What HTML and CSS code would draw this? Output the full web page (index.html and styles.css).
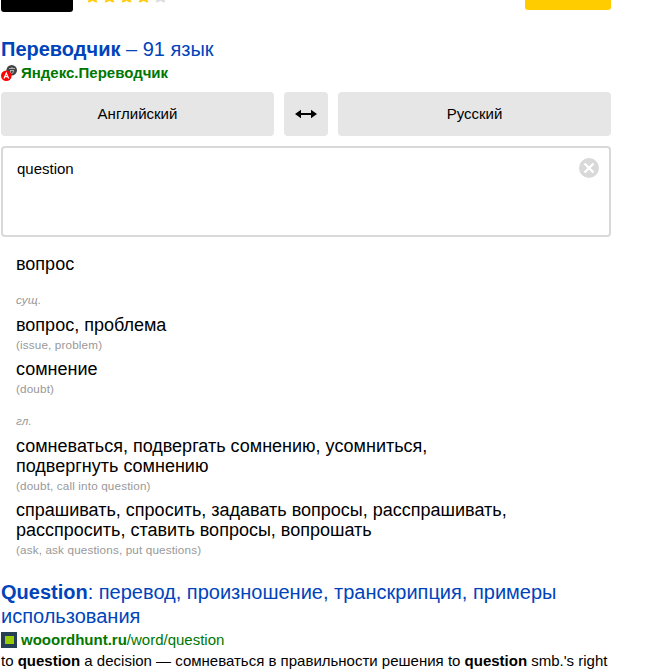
FILE: index.html
```html
<!DOCTYPE html>
<html lang="ru">
<head>
<meta charset="utf-8">
<title>Переводчик</title>
<link rel="stylesheet" href="styles.css">
</head>
<body>
<div class="market">
  <div class="thumb"></div>
  <svg class="stars" width="82" height="4" viewBox="0 0 82 4"><g fill="#fc1"><path id="s" d="M2.500-3h7.500v2l1.500 3.200H9L6.500.8 4 2.200H1.500L3-1z"/><use href="#s" x="17"/><use href="#s" x="34"/><use href="#s" x="51"/></g><path fill="#ddd" d="M70.500-3H78v2l1.500 3.200H77L74.500.8 72 2.200h-2.500L71-1z"/></svg>
  <div class="buy"></div>
</div>
<main>
  <section class="translator">
    <h2><a><b>Переводчик</b> – 91 язык</a></h2>
    <div class="source">
      <svg width="16" height="16" viewBox="0 0 16 16"><circle cx="10.700" cy="5.300" r="5.300" fill="#444"/><path d="M8 3.500h6M11 2v1.500M9 5.500h4M12.500 5.500q0 3-2 3M9.500 5.500v2.500" stroke="#bbb" stroke-width=".9" fill="none"/><circle cx="5.300" cy="10.700" r="5.300" fill="#f00"/><path d="M3 13.500l2.300-5.500 2.300 5.500M4 11.700h2.600" stroke="#fff" stroke-width="1.200" fill="none"/></svg>
      <b>Яндекс.Переводчик</b>
    </div>
    <div class="langs">
      <div class="btn">Английский</div>
      <div class="btn"><svg width="22" height="10" viewBox="0 0 22 10"><path d="M0 5l6-4.200V4h10V.8L22 5l-6 4.200V6H6v3.200z"/></svg></div>
      <div class="btn">Русский</div>
    </div>
    <div class="field"><span>question</span>
      <svg width="20" height="20" viewBox="0 0 20 20"><circle cx="10" cy="10" r="10" fill="#d9d9d9"/><path d="M5.500 5.500l9 9M14.500 5.500l-9 9" stroke="#fff" stroke-width="2.400"/></svg>
    </div>
    <div class="result">
      <p class="word">вопрос</p>
      <p class="pos">сущ.</p>
      <p class="word">вопрос, проблема</p><p class="hint">(issue, problem)</p>
      <p class="word">сомнение</p><p class="hint">(doubt)</p>
      <p class="pos next">гл.</p>
      <p class="word">сомневаться, подвергать сомнению, усомниться,<br>подвергнуть сомнению</p><p class="hint">(doubt, call into question)</p>
      <p class="word">спрашивать, спросить, задавать вопросы, расспрашивать,<br>расспросить, ставить вопросы, вопрошать</p><p class="hint">(ask, ask questions, put questions)</p>
    </div>
  </section>
  <section class="site">
    <h2><a><b>Question</b>: перевод, произношение, транскрипция, примеры использования</a></h2>
    <div class="source">
      <svg width="16" height="16" viewBox="0 0 16 16"><path fill="#263f52" d="M0 0h16v16H0z"/><path fill="#9c0" d="M4 4h9v8H4z"/></svg>
      <span><b>wooordhunt.ru</b>/word/question</span>
    </div>
    <p class="snippet">to <b>question</b> a decision — сомневаться в правильности решения to <b>question</b> smb.'s right</p>
  </section>
</main>
</body>
</html>
```
FILE: styles.css
```css
* { box-sizing: border-box; }
body { margin: 0; height: 669px; overflow: hidden; background: #fff; color: #000; font: 15px/20px "Liberation Sans", Arial, sans-serif; }
p, h2 { margin: 0; }
svg { display: block; flex: none; }
.market { display: flex; height: 37px; width: 611px; padding-left: 1px; align-items: flex-start; }
.thumb { width: 72px; height: 12px; background: #000; border-radius: 0 0 3px 3px; }
.stars { margin-left: 13px; }
.buy { width: 86px; height: 10px; margin-left: auto; background: #fc0; border-radius: 0 0 3px 3px; }
main { width: 610px; margin-left: 1px; }
h2 { font-size: 20px; line-height: 24px; font-weight: 400; color: #04b; }
.source { display: flex; gap: 4px; align-items: center; height: 24px; color: #070; }
.langs { display: grid; grid-template-columns: 273px 44px 273px; gap: 10px; margin-top: 7px; }
.btn { display: flex; align-items: center; justify-content: center; height: 44px; background: #e6e6e6; border-radius: 4px; }
.field { display: flex; justify-content: space-between; height: 91px; margin-top: 10px; padding: 10px; padding-left: 14px; border: 2px solid #d9d9d9; border-radius: 4px; }
.field span { margin-top: 1px; }
.result { padding: 17px 15px 0; height: 343px; }
.word { font-size: 18px; line-height: 20px; }
.hint { font-size: 11.700px; letter-spacing: .15px; line-height: 16px; margin: 2px 0 6px; color: #999; }
.pos { font-size: 11.700px; letter-spacing: .15px; line-height: 16px; margin: 18px 0 7px; color: #999; font-style: italic; }
.next { margin-top: 16px; }
.snippet { white-space: nowrap; line-height: 20px; margin-top: -1px; }
```
